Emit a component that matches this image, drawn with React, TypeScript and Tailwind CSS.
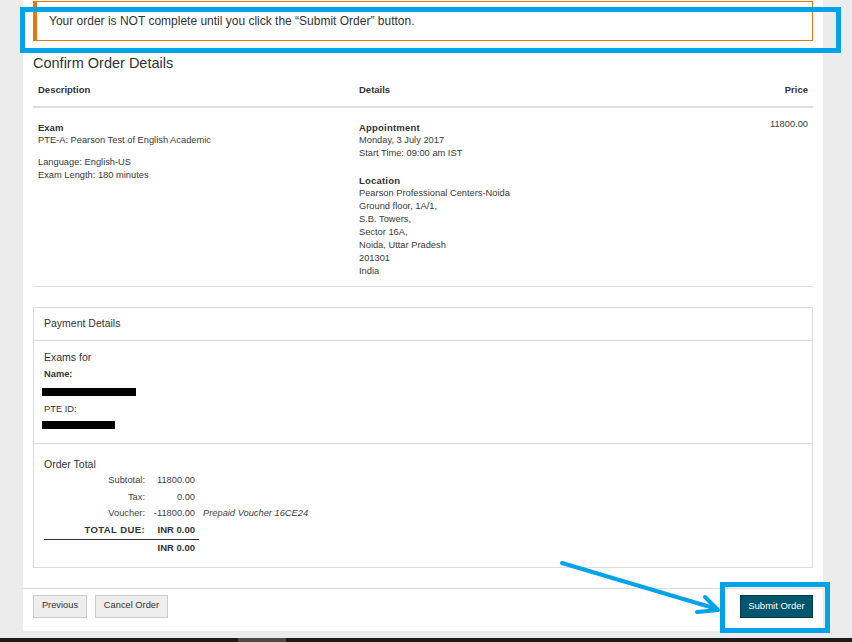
import React from "react";

const descLines = ["Language: English-US", "Exam Length: 180 minutes"];

const locationLines = [
    "Pearson Professional Centers-Noida",
    "Ground floor, 1A/1,",
    "S.B. Towers,",
    "Sector 16A,",
    "Noida, Uttar Pradesh",
    "201301",
    "India",
];

interface TotalRow {
    label: string;
    value: string;
    note?: string;
}

const totals: TotalRow[] = [
    { label: "Subtotal:", value: "11800.00" },
    { label: "Tax:", value: "0.00" },
    { label: "Voucher:", value: "-11800.00", note: "Prepaid Voucher 16CE24" },
];

const App: React.FC = () => {
    return (
        <div className="relative w-[852px] h-[642px] overflow-hidden bg-[#ececec] font-['Liberation_Sans',Arial,sans-serif] text-[#333]">
            {/* White page panel */}
            <div className="ml-[23px] w-[800px] h-[631px] bg-white flex flex-col">
                <div className="px-[10px]">
                    {/* Alert */}
                    <div className="mt-[1px] h-[40px] flex items-center border border-l-4 border-[#e8770e] pl-[12px] text-[12px] text-[#333]">
                        Your order is NOT complete until you click the “Submit Order” button.
                    </div>

                    <h2 className="mt-[13px] text-[14.5px] leading-[18px] text-[#333]">Confirm Order Details</h2>

                    {/* Table header */}
                    <div className="flex pt-[11px] pb-[9px] border-b-2 border-[#ddd] text-[9.5px] leading-[14px] font-bold">
                        <div className="w-[321px] pl-[5px]">Description</div>
                        <div className="flex-1 pl-[5px]">Details</div>
                        <div className="pr-[5px] text-right">Price</div>
                    </div>

                    {/* Table row */}
                    <div className="flex pt-[13px] pb-[8px] border-b border-[#ddd] text-[9.3px] leading-[13px] text-[#3a3a3a]">
                        <div className="w-[321px] pl-[5px]">
                            <div className="font-bold text-[9.5px] text-[#333]">Exam</div>
                            <div>PTE-A: Pearson Test of English Academic</div>
                            <div className="mt-[9px]">
                                {descLines.map((l) => (
                                    <div key={l}>{l}</div>
                                ))}
                            </div>
                        </div>
                        <div className="flex-1 pl-[5px]">
                            <div className="font-bold text-[9.5px] tracking-[0.2px] text-[#333]">Appointment</div>
                            <div>Monday, 3 July 2017</div>
                            <div>Start Time: 09:00 am IST</div>
                            <div className="mt-[14px] font-bold text-[9.5px] tracking-[0.2px] text-[#333]">Location</div>
                            {locationLines.map((l) => (
                                <div key={l}>{l}</div>
                            ))}
                        </div>
                        <div className="pr-[5px] -mt-[3px] text-right">11800.00</div>
                    </div>

                    {/* Payment details panel */}
                    <div className="mt-[20px] border border-[#ddd]">
                        <div className="h-[33px] flex items-center px-[10px] border-b border-[#ddd] text-[10.5px]">
                            Payment Details
                        </div>
                        <div className="px-[10px] pt-[8px] pb-[14px] border-b border-[#ddd]">
                            <div className="text-[10.5px] leading-[16px]">Exams for</div>
                            <div className="mt-[2px] text-[9.3px] leading-[14px] font-bold">Name:</div>
                            <div className="mt-[7px] -ml-[2px] h-[8px] w-[94px] bg-black" />
                            <div className="mt-[6px] text-[9.3px] leading-[14px]">PTE ID:</div>
                            <div className="mt-[5px] -ml-[2px] h-[8px] w-[73px] bg-black" />
                        </div>
                        <div className="px-[10px] pt-[12px] pb-[10px] text-[9.3px]">
                            <div className="text-[10.5px] leading-[16px]">Order Total</div>
                            {totals.map((r) => (
                                <div key={r.label} className="flex leading-[16.5px] text-[#444]">
                                    <div className="w-[101px] text-right">{r.label}</div>
                                    <div className="w-[54px] pr-[4px] text-right">{r.value}</div>
                                    {r.note && <div className="pl-[4px] italic">{r.note}</div>}
                                </div>
                            ))}
                            <div className="flex w-[155px] pb-[1px] border-b border-[#333] leading-[16.5px] font-bold text-[9.5px]">
                                <div className="w-[101px] text-right tracking-[0.4px]">TOTAL DUE:</div>
                                <div className="w-[54px] pr-[4px] text-right">INR 0.00</div>
                            </div>
                            <div className="flex leading-[16.5px] font-bold text-[9.5px]">
                                <div className="w-[101px]" />
                                <div className="w-[54px] pr-[4px] text-right">INR 0.00</div>
                            </div>
                        </div>
                    </div>
                </div>

                {/* Footer buttons */}
                <div className="mt-[20px] border-t border-[#ddd] px-[10px] pt-[6px] flex justify-between">
                    <div className="flex gap-[8px]">
                        <button className="h-[23px] w-[54px] border border-[#ccc] bg-[#eee] text-[9.3px] text-[#333]">
                            Previous
                        </button>
                        <button className="h-[23px] w-[73px] border border-[#ccc] bg-[#eee] text-[9.3px] text-[#333]">
                            Cancel Order
                        </button>
                    </div>
                    <button className="h-[23px] w-[73px] border border-[#00394a] bg-[#00566d] text-[9.5px] text-white">
                        Submit Order
                    </button>
                </div>
            </div>

            {/* Bottom scrollbar strip */}
            <div className="mt-[7px] h-[4px] bg-[#1b1b1b]">
                <div className="ml-[238px] h-full w-[48px] bg-[#4a4a4a]" />
            </div>

            {/* Annotations */}
            <div className="absolute left-[20px] top-[7px] w-[821px] h-[46px] border-[5px] border-[#00a2e8]" />
            <div className="absolute left-[720px] top-[582px] w-[110px] h-[51px] border-[5px] border-[#00a2e8]" />
            <svg className="absolute left-0 top-0" width="852" height="642" viewBox="0 0 852 642">
                <g stroke="#00a2e8" strokeWidth="4" strokeLinecap="round" strokeLinejoin="round" fill="none">
                    <path d="M562 563 L717 609" />
                    <path d="M705 597 L718 610 L697 612" />
                </g>
            </svg>
        </div>
    );
};

export default App;
